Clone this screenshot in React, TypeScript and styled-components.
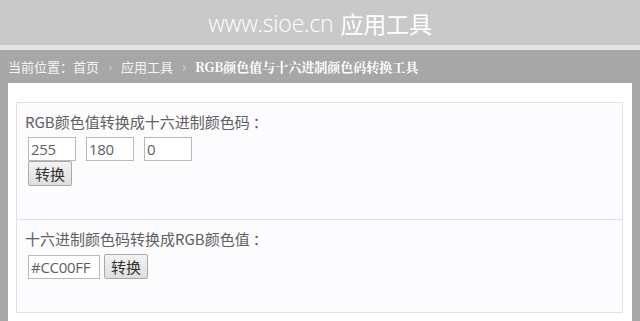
import * as React from "react";
import styled, { createGlobalStyle } from "styled-components";

const GlobalStyle = createGlobalStyle`
  html, body {
    margin: 0;
    padding: 0;
    background: #a7a7a7;
    font-family: "Noto Sans CJK SC", "Noto Sans", sans-serif;
  }
`;

const Header = styled.header`
  height: 45px;
  background: #c9c9c9;
  border-bottom: 5px solid #e3e3e3;
  display: flex;
  align-items: center;
  justify-content: center;
  color: #ffffff;
  font-size: 23px;
  letter-spacing: -0.2px;
  .site {
    font-family: "Open Sans", "Noto Sans", sans-serif;
    font-weight: 300;
    margin-right: 7px;
  }
`;

const Crumbs = styled.nav`
  height: 33px;
  padding: 0 8px;
  display: flex;
  align-items: center;
  color: #f4f4f4;
  font-size: 13px;
  a {
    color: inherit;
    text-decoration: none;
  }
  .sep {
    color: #d8d8d8;
    margin: 0 9px;
  }
  strong {
    font-family: "Noto Serif CJK SC", "Noto Sans CJK SC", serif;
    font-weight: 700;
    color: #ffffff;
  }
`;

const Main = styled.main`
  margin: 0 8px;
  background: #ffffff;
  padding: 19px 9px 9px 8px;
  min-height: 210px;
`;

const Panel = styled.div`
  border: 1px solid #e2e2e4;
  background: #fcfbfd;
`;

const Section = styled.section<{ $height: number; $last?: boolean }>`
  height: ${(p) => p.$height}px;
  box-sizing: border-box;
  padding: 9px 8px 0 8px;
  border-bottom: ${(p) => (p.$last ? "none" : "1px solid #e0e0e2")};
`;

const Label = styled.p`
  margin: 0 0 5px 0;
  font-size: 15px;
  line-height: 20px;
  color: #606060;
  .colon {
    margin-left: 3px;
  }
`;

const Row = styled.div<{ $gap: number }>`
  display: flex;
  align-items: center;
  gap: ${(p) => p.$gap}px;
  padding-left: 3px;
`;

const Field = styled.input<{ $w: number }>`
  width: ${(p) => p.$w}px;
  height: 24px;
  box-sizing: border-box;
  border: 1px solid #b9b9b9;
  background: #ffffff;
  padding: 0 2px;
  font-family: "Open Sans", "Noto Sans", sans-serif;
  font-size: 15px;
  letter-spacing: -0.3px;
  color: #606060;
  outline: none;
`;

const Button = styled.button`
  height: 25px;
  box-sizing: border-box;
  padding: 0 6px;
  border: 1px solid #a9a9a9;
  border-radius: 2px;
  background: linear-gradient(#f3f3f3, #dedede);
  font-family: "Noto Sans CJK SC", sans-serif;
  font-size: 15px;
  color: #333333;
  line-height: 1;
`;

export default function App() {
  const [rgb, setRgb] = React.useState(["255", "180", "0"]);
  const [hex, setHex] = React.useState("#CC00FF");

  return (
    <>
      <GlobalStyle />
      <Header>
        <span className="site">www.sioe.cn</span>
        <span>应用工具</span>
      </Header>
      <Crumbs>
        当前位置：<a href="#">首页</a>
        <span className="sep">›</span>
        <a href="#">应用工具</a>
        <span className="sep">›</span>
        <strong>RGB颜色值与十六进制颜色码转换工具</strong>
      </Crumbs>
      <Main>
        <Panel>
          <Section $height={117}>
            <Label>
              RGB颜色值转换成十六进制颜色码<span className="colon">：</span>
            </Label>
            <Row $gap={10}>
              {rgb.map((v, i) => (
                <Field
                  key={i}
                  $w={48}
                  value={v}
                  onChange={(e) => {
                    const next = [...rgb];
                    next[i] = e.target.value;
                    setRgb(next);
                  }}
                />
              ))}
            </Row>
            <Row $gap={0}>
              <Button>转换</Button>
            </Row>
          </Section>
          <Section $height={92} $last>
            <Label>
              十六进制颜色码转换成RGB颜色值<span className="colon">：</span>
            </Label>
            <Row $gap={4}>
              <Field $w={72} value={hex} onChange={(e) => setHex(e.target.value)} />
              <Button>转换</Button>
            </Row>
          </Section>
        </Panel>
      </Main>
    </>
  );
}
